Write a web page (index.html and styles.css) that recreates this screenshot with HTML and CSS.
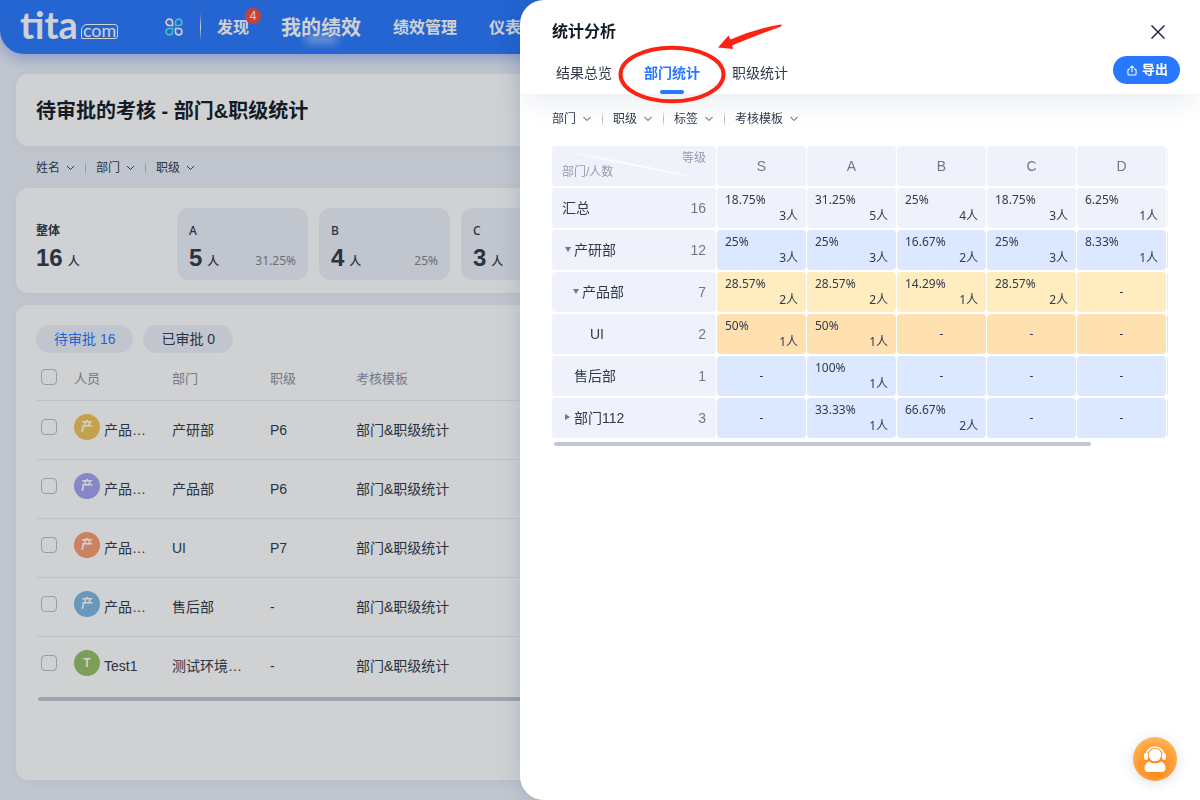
FILE: index.html
```html
<!DOCTYPE html>
<html lang="zh-CN">
<head>
<meta charset="utf-8">
<meta name="viewport" content="width=device-width, initial-scale=1">
<title>统计分析</title>
<link rel="stylesheet" href="styles.css">
</head>
<body>
<svg class="defs" aria-hidden="true">
  <symbol id="chevron" viewBox="0 0 9 6"><path d="M1 1l3.500 3.500L8 1" fill="none" stroke="currentColor"/></symbol>
  <linearGradient id="fade"><stop offset="0" stop-color="#fff" stop-opacity="0"/><stop offset=".5" stop-color="#fff"/><stop offset="1" stop-color="#fff" stop-opacity="0"/></linearGradient>
</svg>
<div class="app">
  <header class="topbar">
    <a class="logo" href="#"><span class="logo-name">tita</span><span class="logo-com">com</span></a>
    <button class="apps" aria-label="应用">
      <svg width="18" height="18" viewBox="0 0 18 18" fill="none" stroke-width="1.600">
        <path stroke="#fff" d="M7.500 7.500H4.300A3.200 3.200 0 1 1 7.500 4.300z"/>
        <path stroke="#4fe6f0" d="M10.500 7.500V4.300A3.200 3.200 0 1 1 13.700 7.500z"/>
        <path stroke="#4fe6f0" d="M7.500 10.500V13.700A3.200 3.200 0 1 1 4.300 10.500z"/>
        <path stroke="#fff" d="M10.500 10.500H13.700A3.200 3.200 0 1 1 10.500 13.700z"/>
      </svg>
    </button>
    <span class="topbar-line"></span>
    <nav class="nav">
      <a href="#">发现<span class="badge">4</span></a>
      <a class="current" href="#">我的绩效</a>
      <a href="#">绩效管理</a>
      <a href="#">仪表盘</a>
    </nav>
  </header>
  <main class="content">
    <section class="card title-card"><h1>待审批的考核 - 部门&amp;职级统计</h1></section>
    <div class="filters page-filters">
      <button>姓名<svg><use href="#chevron"/></svg></button><i></i>
      <button>部门<svg><use href="#chevron"/></svg></button><i></i>
      <button>职级<svg><use href="#chevron"/></svg></button>
    </div>
    <section class="card stats">
      <div class="stat total"><h2>整体</h2><p><b>16</b><strong>人</strong></p></div>
      <div class="stat"><h2>A</h2><p><b>5</b><strong>人</strong><span>31.25%</span></p></div>
      <div class="stat"><h2>B</h2><p><b>4</b><strong>人</strong><span>25%</span></p></div>
      <div class="stat"><h2>C</h2><p><b>3</b><strong>人</strong><span>18.75%</span></p></div>
    </section>
    <section class="card list">
      <div class="pills"><button class="on">待审批 16</button><button>已审批 0</button></div>
      <table class="people">
        <thead><tr><th class="col-check"><input type="checkbox" aria-label="全选"></th><th class="col-person">人员</th><th class="col-dept">部门</th><th class="col-level">职级</th><th>考核模板</th></tr></thead>
        <tbody>
          <tr><td class="check"><input type="checkbox" aria-label="选择产品"></td><td class="person"><div><span class="avatar gold">产</span>产品…</div></td><td>产研部</td><td>P6</td><td>部门&amp;职级统计</td></tr>
          <tr><td class="check"><input type="checkbox" aria-label="选择产品"></td><td class="person"><div><span class="avatar violet">产</span>产品…</div></td><td>产品部</td><td>P6</td><td>部门&amp;职级统计</td></tr>
          <tr><td class="check"><input type="checkbox" aria-label="选择产品"></td><td class="person"><div><span class="avatar coral">产</span>产品…</div></td><td>UI</td><td>P7</td><td>部门&amp;职级统计</td></tr>
          <tr><td class="check"><input type="checkbox" aria-label="选择产品"></td><td class="person"><div><span class="avatar sky">产</span>产品…</div></td><td>售后部</td><td>-</td><td>部门&amp;职级统计</td></tr>
          <tr><td class="check"><input type="checkbox" aria-label="选择Test1"></td><td class="person"><div><span class="avatar green">T</span>Test1</div></td><td>测试环境…</td><td>-</td><td>部门&amp;职级统计</td></tr>
        </tbody>
      </table>
      <div class="scrollbar page-scroll"></div>
    </section>
  </main>
</div>
<div class="mask"></div>
<aside class="drawer" role="dialog" aria-label="统计分析">
  <header class="drawer-head">
    <div class="drawer-title">
      <h2>统计分析</h2>
      <button class="close" aria-label="关闭"><svg width="14" height="14" viewBox="0 0 14 14"><path d="M.5.5l13 13M13.500.5l-13 13" stroke="#1f2a3c" stroke-width="1.500"/></svg></button>
    </div>
    <div class="drawer-bar">
      <nav class="tabs"><a href="#">结果总览</a><a class="active" href="#">部门统计</a><a href="#">职级统计</a></nav>
      <button class="export"><svg width="10" height="11" viewBox="0 0 11 12" fill="none" stroke="#fff" stroke-width="1.200"><path d="M3.200 4.500H2.500Q1 4.500 1 6V9.500Q1 11 2.500 11H8.500Q10 11 10 9.500V6Q10 4.500 8.500 4.500H7.800M5.500 8V1.200M3.500 3l2-2 2 2"/></svg>导出</button>
    </div>
  </header>
  <div class="filters drawer-filters">
    <button>部门<svg><use href="#chevron"/></svg></button><i></i>
    <button>职级<svg><use href="#chevron"/></svg></button><i></i>
    <button>标签<svg><use href="#chevron"/></svg></button><i></i>
    <button>考核模板<svg><use href="#chevron"/></svg></button>
  </div>
  <div class="matrix-wrap">
    <table class="matrix">
      <thead><tr>
        <th class="corner"><svg width="144" height="32" viewBox="0 0 144 32"><path d="M0 1L142 29.500L142 30.500L0 2z" fill="url(#fade)" stroke="url(#fade)"/></svg><span class="axis-x">等级</span><span class="axis-y">部门/人数</span></th>
        <th>S</th><th>A</th><th>B</th><th>C</th><th>D</th><th></th>
      </tr></thead>
      <tbody>
        <tr><th><div>汇总<em>16</em></div></th><td><p>18.75%</p><p>3人</p></td><td><p>31.25%</p><p>5人</p></td><td><p>25%</p><p>4人</p></td><td><p>18.75%</p><p>3人</p></td><td><p>6.25%</p><p>1人</p></td><td></td></tr>
        <tr class="blue"><th><div><button class="toggle open" aria-label="收起"></button>产研部<em>12</em></div></th><td><p>25%</p><p>3人</p></td><td><p>25%</p><p>3人</p></td><td><p>16.67%</p><p>2人</p></td><td><p>25%</p><p>3人</p></td><td><p>8.33%</p><p>1人</p></td><td></td></tr>
        <tr class="yellow"><th><div class="level-1"><button class="toggle open" aria-label="收起"></button>产品部<em>7</em></div></th><td><p>28.57%</p><p>2人</p></td><td><p>28.57%</p><p>2人</p></td><td><p>14.29%</p><p>1人</p></td><td><p>28.57%</p><p>2人</p></td><td class="none">-</td><td></td></tr>
        <tr class="orange"><th><div class="level-2"><span class="toggle"></span>UI<em>2</em></div></th><td><p>50%</p><p>1人</p></td><td><p>50%</p><p>1人</p></td><td class="none">-</td><td class="none">-</td><td class="none">-</td><td></td></tr>
        <tr class="blue"><th><div><span class="toggle"></span>售后部<em>1</em></div></th><td class="none">-</td><td><p>100%</p><p>1人</p></td><td class="none">-</td><td class="none">-</td><td class="none">-</td><td></td></tr>
        <tr class="blue"><th><div><button class="toggle shut" aria-label="展开"></button>部门112<em>3</em></div></th><td class="none">-</td><td><p>33.33%</p><p>1人</p></td><td><p>66.67%</p><p>2人</p></td><td class="none">-</td><td class="none">-</td><td></td></tr>
      </tbody>
    </table>
    <div class="scrollbar matrix-scroll"></div>
  </div>
  <svg class="callout" width="166" height="84" viewBox="0 0 166 84" aria-hidden="true">
    <ellipse cx="54" cy="54.500" rx="51.500" ry="26.800" fill="none" stroke="#fd2314" stroke-width="4"/>
    <path d="M100 27.500L110.500 15.500L112.500 19.500Q136 9 163 4.500Q165 5 162 7Q136 16 114 25.500L115 29z" fill="#fd2314"/>
  </svg>
</aside>
<button class="support" aria-label="客服">
  <svg width="22" height="28" viewBox="0 0 22 28"><path d="M2 11A9 9 0 0 1 20 11" fill="none" stroke="#fff" stroke-width="1.600"/><rect x="0" y="8" width="4" height="7" rx="2" fill="#fff"/><rect x="18" y="8" width="4" height="7" rx="2" fill="#fff"/><circle cx="11" cy="10" r="6.300" fill="#fff"/><path d="M5 16.500Q11 20.500 17 16.500Q21.500 18 21.500 23Q21.500 27 18 27H4Q.5 27 .5 23Q.5 18 5 16.500z" fill="#fff"/></svg>
</button>
</body>
</html>
```
FILE: styles.css
```css
* { box-sizing: border-box; }
body, h1, h2, p { margin: 0; }
body {
  font-family: "Liberation Sans", "Noto Sans CJK SC", sans-serif;
  font-size: 14px;
  line-height: 20px;
  color: #303a4c;
  background: #edf1fa;
}
button { font: inherit; color: inherit; border: 0; padding: 0; background: none; }
a { color: inherit; text-decoration: none; }
.defs { position: absolute; width: 0; height: 0; }

.app { height: 100vh; display: flex; flex-direction: column; overflow: hidden; }
.topbar {
  flex: none;
  display: flex;
  align-items: center;
  height: 54px;
  padding-left: 20px;
  background: #2878ff;
  color: #fff;
  border-bottom-left-radius: 24px;
  box-shadow: 0 4px 16px rgba(40, 100, 220, .4);
}
.logo { display: flex; align-items: flex-end; gap: 3px; width: 145px; padding-bottom: 6px; font-family: Lato, sans-serif; }
.logo-name { font-size: 38px; font-weight: 700; line-height: 36px; }
.logo-com { border: 1px solid #fff; border-radius: 6px 3px 3px 1px; font-size: 18px; line-height: 11px; height: 15px; padding: 0 1px; margin-bottom: 3px; }
.apps { display: flex; }
.topbar-line { width: 1px; height: 28px; margin: 0 16px 0 17px; background: linear-gradient(transparent, #fff, transparent); }
.nav { display: flex; align-items: center; gap: 32px; padding-top: 2px; font-size: 16px; font-weight: 700; white-space: nowrap; }
.nav a { position: relative; }
.nav .current { font-size: 20px; }
.nav .current::after { content: ""; position: absolute; left: 24px; right: 24px; bottom: -5px; height: 8px; background: rgba(255, 255, 255, .5); filter: blur(4px); }
.badge { position: absolute; top: -10px; right: -12px; width: 16px; height: 16px; border-radius: 8px; background: #f8483f; font-size: 12px; font-weight: 400; line-height: 16px; text-align: center; }

.content { flex: 1; display: flex; flex-direction: column; padding: 20px 16px; }
.card { background: #fff; border-radius: 12px; box-shadow: 0 2px 8px rgba(60, 90, 150, .06); }
.title-card { padding: 23px 20px 21px; }
.title-card h1 { font-size: 20px; font-weight: 700; line-height: 28px; color: #141c28; }
.filters { display: flex; align-items: center; gap: 10px; font-size: 12px; }
.filters button { display: flex; align-items: center; gap: 6px; }
.filters svg { width: 9px; height: 6px; }
.filters i { width: 1px; height: 16px; background: linear-gradient(transparent, #a3aec2, transparent); }
.page-filters { padding: 12px 20px 10px; }

.stats { display: flex; gap: 11px; padding: 20px 20px 13px; margin-bottom: 12px; }
.stat { width: 131px; height: 72px; flex: none; padding: 13px 12px 0; border-radius: 12px; background: #edf1f9; }
.stat.total { width: 130px; padding: 13px 0 0; background: none; }
.stat h2 { font-family: "Noto Sans", "Noto Sans CJK SC", sans-serif; font-size: 12px; font-weight: 500; line-height: 20px; }
.stat.total h2 { font-weight: 700; }
.stat p { display: flex; align-items: baseline; gap: 5px; line-height: 34px; }
.stat b { font-size: 24px; }
.stat strong { font-size: 12px; font-weight: 500; }
.stat span { align-self: center; margin-left: auto; font: 12px "Noto Sans", sans-serif; color: #7c8596; }

.list { flex: 1; padding: 20px; }
.pills { display: flex; gap: 10px; }
.pills button { height: 28px; padding: 0 18px; border-radius: 14px; background: #edf1f9; }
.pills .on { color: #2878ff; }
.people { width: 100%; table-layout: fixed; border-collapse: collapse; }
.people th { height: 47px; padding: 6px 0 0; text-align: left; font-size: 13px; font-weight: 400; color: #8a94a5; border-bottom: 1px solid #e9ecf2; }
.people td { height: 59px; padding: 0; border-bottom: 1px solid #e9ecf2; }
.people tr:last-child td { border-bottom: 0; }
.people .col-check { width: 38px; padding: 2px 0 0 5px; }
.people .col-person, .people .col-dept { width: 98px; }
.people .col-level { width: 86px; }
.people .check { vertical-align: top; padding: 18px 0 0 5px; }
.people .person { vertical-align: top; padding-top: 13px; }
.people input { appearance: none; display: block; width: 16px; height: 16px; margin: 0; border: 1px solid #b3bfd0; border-radius: 4px; background: #fff; }
.person div { display: flex; align-items: flex-end; gap: 4px; }
.avatar { width: 26px; height: 26px; border-radius: 13px; line-height: 26px; font-size: 12px; font-weight: 700; text-align: center; color: #fff; }
.gold { background: #f0c558; }
.violet { background: #a3a3f2; }
.coral { background: #fa9b72; }
.sky { background: #7db8e4; }
.green { background: #95c167; }
.scrollbar { height: 4px; border-radius: 2px; background: #bfc6d4; }
.page-scroll { margin: 2px 0 0 2px; }

.mask { position: fixed; inset: 0; background: rgba(20, 25, 30, .2); }
.drawer {
  position: fixed;
  top: 0;
  right: 0;
  bottom: 0;
  width: 680px;
  max-width: 100%;
  background: #fff;
  border-radius: 24px 0 0 24px;
  box-shadow: 0 0 24px rgba(40, 80, 130, .2);
}
.drawer-head { padding: 21px 20px 0 32px; box-shadow: 0 12px 24px -2px rgba(30, 50, 100, .08); }
.drawer-title { display: flex; justify-content: space-between; height: 31px; }
.drawer-title h2 { font-size: 16px; font-weight: 700; line-height: 22px; color: #141c28; }
.close { display: flex; align-items: center; height: 22px; margin-right: 15px; }
.drawer-bar { display: flex; justify-content: space-between; align-items: flex-start; padding-top: 4px; }
.tabs { display: flex; gap: 32px; padding-left: 4px; }
.tabs a { display: flex; flex-direction: column; align-items: center; height: 38px; line-height: 34px; }
.tabs .active { color: #2878ff; font-weight: 700; }
.tabs .active::after { content: ""; width: 24px; height: 4px; border-radius: 2px; background: #2878ff; }
.export { display: flex; align-items: center; gap: 5px; height: 28px; padding: 0 12px 0 14px; border-radius: 14px; background: #2878ff; color: #fff; font-size: 13px; font-weight: 700; }
.drawer-filters { padding: 15px 32px; }
.drawer-filters svg { width: 10px; }

.matrix-wrap { overflow: hidden; margin: 0 32px 0 31px; }
.matrix { width: 706px; table-layout: fixed; border-spacing: 1px 2px; }
.matrix th, .matrix td { height: 40px; padding: 0; border-radius: 4px; background: #eff2fa; font-weight: 400; }
.matrix thead th { color: #6f7888; }
.matrix .corner { position: relative; width: 164px; padding: 0 10px 2px; font-size: 12px; line-height: 14px; color: #929cae; }
.corner svg { position: absolute; top: 3px; left: 10px; }
.axis-x { display: block; text-align: right; }
.axis-y { display: block; text-align: left; }
.matrix th div { display: flex; align-items: center; padding: 0 10px; }
.matrix .level-1 { padding-left: 18px; }
.matrix .level-2 { padding-left: 26px; }
.matrix em { margin-left: auto; font-style: normal; color: #6f7888; }
.toggle { width: 12px; height: 20px; display: flex; align-items: center; padding: 0 0 2px 3px; }
.toggle.open::before { content: ""; border: solid transparent; border-width: 5px 3px 0; border-top-color: #6f7888; }
.toggle.shut::before { content: ""; border: solid transparent; border-width: 3px 0 3px 5px; border-left-color: #6f7888; }
.matrix td { padding: 0 8px; font-family: "Noto Sans", "Noto Sans CJK SC", sans-serif; font-size: 12px; line-height: 16px; }
.matrix td p + p { text-align: right; }
.matrix .none { text-align: center; }
.blue td { background: #dce8ff; }
.yellow td { background: #ffedc0; }
.orange td { background: #ffe0b0; }
.matrix-scroll { width: 87%; margin: 2px 0 0 3px; }

.callout { position: absolute; top: 20px; left: 98px; pointer-events: none; }
.support {
  position: fixed;
  right: 23px;
  bottom: 19px;
  width: 44px;
  height: 44px;
  display: flex;
  align-items: center;
  justify-content: center;
  border-radius: 22px;
  background: radial-gradient(circle at 50% 65%, #ff8a1c 20%, #ffb657 80%);
  box-shadow: 0 2px 12px rgba(60, 90, 150, .2);
}
```
